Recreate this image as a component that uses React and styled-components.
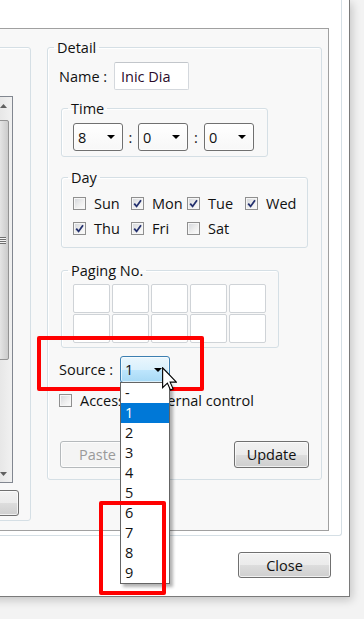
import React from 'react';
import styled, { createGlobalStyle } from 'styled-components';

const Global = createGlobalStyle`
  html, body { margin: 0; padding: 0; }
  body {
    background: #f3f3f3;
    font-family: "Open Sans", "Noto Sans", sans-serif;
    font-size: 14.5px;
    color: #111;
    overflow: hidden;
  }
`;

const Stage = styled.div`
  position: relative;
  width: 364px;
  height: 619px;
  overflow: hidden;
`;

const Window = styled.div`
  box-sizing: border-box;
  width: 650px;
  margin-left: -300px;
  background: #fff;
  border-right: 1px solid #7a7a7a;
  border-bottom: 1px solid #7a7a7a;
  box-shadow: 2px 3px 9px rgba(0, 0, 0, 0.2);
  padding: 0 7px 18px 0;
  display: flex;
  flex-direction: column;
`;

const Frame = styled.div`
  border-right: 1px solid #d5dfe5;
  border-bottom: 1px solid #d5dfe5;
  border-bottom-right-radius: 3px;
  padding: 28px 12px 4px 10px;
`;

const Panel = styled.div`
  box-sizing: border-box;
  height: 503px;
  border: 1px solid #a0a0a0;
  background: #f8f8f8;
  display: flex;
  align-items: flex-start;
  gap: 16px;
  padding: 11px 6px 9px 10px;
`;

const LeftGroup = styled.div`
  flex: 1;
  box-sizing: border-box;
  height: 474px;
  margin-top: 7px;
  border: 1px solid #d5dfe5;
  border-radius: 3px;
  box-shadow: inset 1px 1px 0 #fff;
  display: flex;
  flex-direction: column;
  align-items: flex-end;
  padding-top: 48px;
`;

const ListBox = styled.div`
  box-sizing: border-box;
  width: 200px;
  height: 387px;
  margin-right: 17px;
  border: 1px solid #828790;
  background: #fff;
  display: flex;
  justify-content: flex-end;
`;

const ScrollBar = styled.div`
  width: 17px;
  display: flex;
  flex-direction: column;
  background: linear-gradient(to right, #e3e3e3, #f1f1f1);
`;

const ScrollArrow = styled.div`
  height: 17px;
  display: flex;
  align-items: center;
  justify-content: center;
  svg { display: block; }
`;

const Track = styled.div`
  flex: 1;
  padding-top: 6px;
`;

const Thumb = styled.div`
  box-sizing: border-box;
  height: 240px;
  margin: 0 3px 0 1px;
  border: 1px solid #939393;
  border-radius: 2px;
  background: linear-gradient(to right, #eeeeee, #dcdcdc 50%, #cbcbcb);
  display: flex;
  align-items: center;
  justify-content: center;
`;

const Grip = styled.div`
  width: 7px;
  height: 7px;
  background: repeating-linear-gradient(to bottom, #6f6f6f 0 1px, #f4f4f4 1px 2px);
`;

const Button = styled.button`
  box-sizing: border-box;
  width: ${(p) => p.$w || 75}px;
  height: ${(p) => p.$h || 27}px;
  margin: 0;
  padding: 0;
  font-family: inherit;
  font-size: 14.5px;
  color: ${(p) => (p.disabled ? '#9a9a9a' : '#111')};
  border: 1px solid ${(p) => (p.disabled ? '#b5b9bc' : '#707070')};
  border-radius: 3px;
  background: ${(p) =>
    p.disabled
      ? '#f4f4f4'
      : 'linear-gradient(to bottom, #f2f2f2 0%, #ebebeb 50%, #dddddd 51%, #cfcfcf 100%)'};
  box-shadow: inset 0 0 0 1px rgba(255, 255, 255, 0.7);
`;

const LeftButton = styled(Button)`
  margin-top: 7px;
  margin-right: 11px;
`;

const GroupBox = styled.fieldset`
  box-sizing: border-box;
  min-width: 0;
  margin: 0;
  margin-top: ${(p) => p.$mt || 0}px;
  margin-left: ${(p) => p.$ml || 0}px;
  width: ${(p) => p.$w}px;
  padding: 0;
  border: 1px solid #d5dfe5;
  border-radius: 3px;
  box-shadow: inset 1px 1px 0 #fff;
`;

const Legend = styled.legend`
  margin-left: 6px;
  padding: 0 3px;
  font-size: 14.5px;
  line-height: 15px;
  color: #111;
`;

const DetailBody = styled.div`
  display: flex;
  flex-direction: column;
  align-items: flex-start;
  padding: 7px 0 11px 11px;
`;

const GroupBody = styled.div`
  padding: ${(p) => p.$pad};
`;

const FieldRow = styled.div`
  display: flex;
  align-items: center;
  height: ${(p) => p.$h}px;
  margin-top: ${(p) => p.$mt || 0}px;
`;

const Label = styled.span`
  width: ${(p) => p.$w}px;
  flex: none;
  white-space: nowrap;
`;

const TextBox = styled.div`
  box-sizing: border-box;
  width: 75px;
  height: 28px;
  border: 1px solid #d4d8dd;
  border-top-color: #c2c6cb;
  border-radius: 2px;
  background: #fff;
  padding-left: 6px;
  display: flex;
  align-items: center;
  color: #2a0a2a;
`;

const Combo = styled.div`
  position: relative;
  box-sizing: border-box;
  width: 50px;
  height: ${(p) => (p.$active ? 27 : 28)}px;
  border: 1px solid ${(p) => (p.$active ? '#3c7fb1' : '#707070')};
  border-radius: 3px;
  background: ${(p) =>
    p.$active
      ? 'linear-gradient(to bottom, #eaf6fd 0%, #d9f0fc 50%, #bee6fd 51%, #a7d9f5 100%)'
      : 'linear-gradient(to bottom, #ffffff, #f7f7f7)'};
  box-shadow: inset 0 0 0 1px rgba(255, 255, 255, 0.6);
  display: flex;
  align-items: center;
  justify-content: space-between;
  padding: 0 7px 0 4px;
  svg { display: block; }
`;

const Colon = styled.span`
  width: ${(p) => p.$w}px;
  text-align: center;
`;

const DayGrid = styled.div`
  display: grid;
  grid-template-columns: 58px 56px 58px auto;
  grid-auto-rows: 20px;
  row-gap: 5px;
`;

const CheckItem = styled.label`
  display: flex;
  align-items: center;
  gap: 8px;
  white-space: nowrap;
`;

const Box = styled.span`
  box-sizing: border-box;
  width: 13px;
  height: 13px;
  flex: none;
  border: 1px solid #8f8f8f;
  background: linear-gradient(135deg, #d2d5da 0%, #eeeeee 55%, #fdfdfd 100%);
  box-shadow: inset 0 0 0 1px #f6f6f6;
  display: flex;
  align-items: center;
  justify-content: center;
  svg { display: block; }
`;

const PagingGrid = styled.div`
  display: grid;
  grid-template-columns: repeat(5, 37px);
  grid-auto-rows: 29px;
  column-gap: 2px;
  row-gap: 1px;
`;

const Cell = styled.div`
  border: 1px solid #cfd3d7;
  border-radius: 2px;
  background: #fff;
`;

const ButtonRow = styled.div`
  align-self: stretch;
  display: flex;
  justify-content: space-between;
  margin-top: 31px;
  padding: 0 12px 0 1px;
`;

const CloseRow = styled.div`
  display: flex;
  justify-content: flex-end;
  margin-top: 16px;
  padding-right: 11px;
`;

const DropList = styled.div`
  position: absolute;
  top: 100%;
  left: -1px;
  z-index: 5;
  box-sizing: border-box;
  width: 50px;
  border: 1px solid #646464;
  background: #fff;
  box-shadow: 3px 3px 3px rgba(0, 0, 0, 0.3);
`;

const DropItem = styled.div`
  height: 20px;
  line-height: 20px;
  padding-left: 4px;
  background: ${(p) => (p.$sel ? '#0078d7' : 'transparent')};
  color: ${(p) => (p.$sel ? '#fff' : '#111')};
`;

const Highlight = styled.div`
  position: absolute;
  z-index: ${(p) => p.$z};
  left: ${(p) => p.$x}px;
  top: ${(p) => p.$y}px;
  width: ${(p) => p.$w}px;
  height: ${(p) => p.$h}px;
  box-sizing: border-box;
  border: 4px solid #ff0000;
  border-radius: 2px;
  pointer-events: none;
`;

const Cursor = styled.svg`
  position: absolute;
  z-index: 20;
  left: 162px;
  top: 367px;
`;

const Arrow = () => (
  <svg width="8" height="4" viewBox="0 0 8 4">
    <polygon points="0,0 8,0 4,4" fill="#000" />
  </svg>
);

const Check = () => (
  <svg width="9" height="9" viewBox="0 0 9 9">
    <polyline points="1.2,4.6 3.6,7.4 8,1.2" fill="none" stroke="#23306e" strokeWidth="1.8" />
  </svg>
);

const CheckBox = ({ checked, children }) => (
  <CheckItem>
    <Box>{checked && <Check />}</Box>
    {children}
  </CheckItem>
);

const days = [
  ['Sun', false],
  ['Mon', true],
  ['Tue', true],
  ['Wed', true],
  ['Thu', true],
  ['Fri', true],
  ['Sat', false],
];

const sources = ['-', '1', '2', '3', '4', '5', '6', '7', '8', '9'];

export default function App() {
  return (
    <Stage>
      <Global />
      <Window>
        <Frame>
          <Panel>
            <LeftGroup>
              <ListBox>
                <ScrollBar>
                  <ScrollArrow>
                    <svg width="7" height="4" viewBox="0 0 7 4">
                      <polygon points="0,4 7,4 3.5,0" fill="#606060" />
                    </svg>
                  </ScrollArrow>
                  <Track>
                    <Thumb>
                      <Grip />
                    </Thumb>
                  </Track>
                  <ScrollArrow>
                    <svg width="7" height="4" viewBox="0 0 7 4">
                      <polygon points="0,0 7,0 3.5,4" fill="#606060" />
                    </svg>
                  </ScrollArrow>
                </ScrollBar>
              </ListBox>
              <LeftButton $w={90} $h={26} aria-label="Copy" />
            </LeftGroup>

            <GroupBox $w={275}>
              <Legend>Detail</Legend>
              <DetailBody>
                <FieldRow $h={28}>
                  <Label $w={55}>Name :</Label>
                  <TextBox>Inic Dia</TextBox>
                </FieldRow>

                <GroupBox $w={207} $mt={11} $ml={2}>
                  <Legend>Time</Legend>
                  <GroupBody $pad="7px 0 5px 11px">
                    <FieldRow $h={28}>
                      <Combo>
                        <span>8</span>
                        <Arrow />
                      </Combo>
                      <Colon $w={15}>:</Colon>
                      <Combo>
                        <span>0</span>
                        <Arrow />
                      </Combo>
                      <Colon $w={16}>:</Colon>
                      <Combo>
                        <span>0</span>
                        <Arrow />
                      </Combo>
                    </FieldRow>
                  </GroupBody>
                </GroupBox>

                <GroupBox $w={247} $mt={13} $ml={2}>
                  <Legend>Day</Legend>
                  <GroupBody $pad="8px 0 9px 11px">
                    <DayGrid>
                      {days.map(([d, c]) => (
                        <CheckBox key={d} checked={c}>
                          {d}
                        </CheckBox>
                      ))}
                    </DayGrid>
                  </GroupBody>
                </GroupBox>

                <GroupBox $w={218} $mt={15} $ml={2}>
                  <Legend>Paging No.</Legend>
                  <GroupBody $pad="6px 0 4px 11px">
                    <PagingGrid>
                      {Array.from({ length: 10 }).map((_, i) => (
                        <Cell key={i} />
                      ))}
                    </PagingGrid>
                  </GroupBody>
                </GroupBox>

                <FieldRow $h={27} $mt={8}>
                  <Label $w={61}>Source :</Label>
                  <Combo $active>
                    <span>1</span>
                    <Arrow />
                    <DropList>
                      {sources.map((s) => (
                        <DropItem key={s} $sel={s === '1'}>
                          {s}
                        </DropItem>
                      ))}
                    </DropList>
                  </Combo>
                </FieldRow>

                <FieldRow $h={20} $mt={7}>
                  <CheckBox checked={false}>Access to external control</CheckBox>
                </FieldRow>

                <ButtonRow>
                  <Button disabled>Paste</Button>
                  <Button>Update</Button>
                </ButtonRow>
              </DetailBody>
            </GroupBox>
          </Panel>
        </Frame>
        <CloseRow>
          <Button $w={93} $h={26}>Close</Button>
        </CloseRow>
      </Window>

      <Highlight $x={37} $y={336} $w={167} $h={55} $z={2} />
      <Highlight $x={99} $y={501} $w={67} $h={94} $z={10} />

      <Cursor width="15" height="24" viewBox="0 0 12 19">
        <path
          d="M0.5 0.5 L0.5 16.5 L4.3 12.8 L6.8 18.3 L8.9 17.4 L6.5 12 L11.5 12 Z"
          fill="#fff"
          stroke="#000"
          strokeWidth="0.9"
          strokeLinejoin="miter"
        />
      </Cursor>
    </Stage>
  );
}
